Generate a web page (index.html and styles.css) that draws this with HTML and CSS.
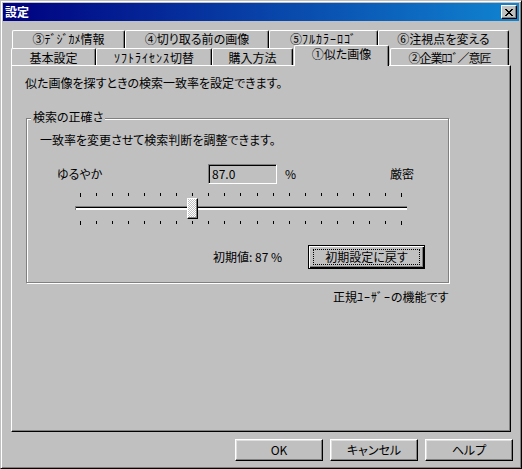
FILE: index.html
```html
<!DOCTYPE html>
<html>
<head>
    <meta http-equiv="Content-Type" content="text/html; charset=utf-8"/>
    <title>設定</title>
    <link rel="stylesheet" href="styles.css">
</head>
<body>
<div class="window">
    <div class="titlebar">
        <span class="title">設定</span>
        <div class="close">
            <svg width="8" height="7" viewBox="0 0 8 7">
                <path d="M0 0h2v1h-2zM6 0h2v1h-2zM1 1h2v1h-2zM5 1h2v1h-2zM2 2h4v1h-4zM3 3h2v1h-2zM2 4h4v1h-4zM1 5h2v1h-2zM5 5h2v1h-2zM0 6h2v1h-2zM6 6h2v1h-2z" fill="#000"/>
            </svg>
        </div>
    </div>

    <div class="tabs">
        <div class="tabrow back">
            <div class="tab" style="width:113px">③ﾃﾞｼﾞｶﾒ情報</div>
            <div class="tab" style="width:144px">④切り取る前の画像</div>
            <div class="tab" style="width:109px">⑤<span class="kana">ﾌﾙｶﾗｰﾛｺﾞ</span></div>
            <div class="tab" style="width:131px">⑥注視点を変える</div>
        </div>
        <div class="tabrow front">
            <div class="tab" style="width:85px">基本設定</div>
            <div class="tab" style="width:116px"><span class="kana">ｿﾌﾄﾗｲｾﾝｽ</span>切替</div>
            <div class="tab" style="width:81px">購入方法</div>
            <div class="tab selected" style="width:95px">①似た画像</div>
            <div class="tab" style="width:119px"><span class="tight">②企業ﾛｺﾞ／意匠</span></div>
        </div>
    </div>

    <div class="panel">
        <div class="desc">似た画像を探すときの検索一致率を設定できます。</div>

        <div class="group">
            <span class="group-label">検索の正確さ</span>
            <div class="hint">一致率を変更させて検索判断を調整できます。</div>

            <div class="row">
                <span class="soft">ゆるやか</span>
                <div class="edit">87.0</div>
                <span class="pct">%</span>
                <span>厳密</span>
            </div>

            <div class="slider">
                <div class="ticks">
                    <i class="long"></i><i></i><i></i><i></i><i></i><i></i><i></i><i></i><i></i><i></i><i></i><i></i><i></i><i></i><i></i><i></i><i></i><i></i><i></i><i></i><i class="long"></i>
                </div>
                <div class="track">
                    <div class="channel"></div>
                    <div class="thumb" style="left:112px"></div>
                </div>
                <div class="ticks">
                    <i class="long"></i><i></i><i></i><i></i><i></i><i></i><i></i><i></i><i></i><i></i><i></i><i></i><i></i><i></i><i></i><i></i><i></i><i></i><i></i><i></i><i class="long"></i>
                </div>
            </div>

            <div class="reset-row">
                <span class="initial">初期値: 87 %</span>
                <div class="btn default"><span class="focus">初期設定に戻す</span></div>
            </div>
        </div>

        <div class="note">正規<span class="kana">ﾕｰｻﾞｰ</span>の機能です</div>
    </div>

    <div class="buttons">
        <div class="btn">OK</div>
        <div class="btn">キャンセル</div>
        <div class="btn">ヘルプ</div>
    </div>
</div>
</body>
</html>
```

FILE: styles.css
```css
* {
    box-sizing: border-box;
}

body {
    margin: 0;
    font-family: "Noto Sans CJK JP", "Liberation Sans", sans-serif;
    font-size: 12px;
    font-feature-settings: "palt";
    line-height: 16px;
    color: #000;
    background: #c0c0c0;
}

/* half-width katakana reads a little wider in the original */
.kana {
    letter-spacing: 1px;
}

.tight {
    letter-spacing: -1px;
}

/* window frame */
.window {
    width: 522px;
    height: 469px;
    background: #c0c0c0;
    border: 1px solid;
    border-color: #c0c0c0 #000 #000 #c0c0c0;
    box-shadow: inset 1px 1px #fff, inset -1px -1px #808080;
    padding: 2px;
}

.titlebar {
    height: 18px;
    display: flex;
    align-items: center;
    justify-content: space-between;
    padding: 0 2px 0 2px;
    background: linear-gradient(to right, #000080, #1084d0);
}

.title {
    color: #fff;
    font-weight: bold;
    font-size: 12px;
}

.close {
    width: 16px;
    height: 14px;
    display: flex;
    align-items: center;
    justify-content: center;
    background: #c0c0c0;
    border: 1px solid;
    border-color: #fff #000 #000 #fff;
    box-shadow: inset -1px -1px #808080;
}

.close svg {
    display: block;
    margin-left: -1px;
}

/* tabs */
.tabs {
    margin-top: 9px;
    position: relative;
    z-index: 1;
}

.tabrow {
    display: flex;
    align-items: flex-end;
}

.tabrow.back {
    height: 18px;
    margin-left: 9px;
}

.tabrow.front {
    height: 17px;
    margin-left: 8px;
}

.tab {
    height: 100%;
    text-align: center;
    line-height: 16px;
    padding-top: 1px;
    white-space: nowrap;
    background: #c0c0c0;
    border-top: 1px solid #fff;
    border-left: 1px solid #fff;
    border-right: 1px solid #000;
    border-radius: 2px 2px 0 0;
    box-shadow: inset -1px 0 #808080;
}

.tabrow.back .tab {
    padding-top: 0;
}

.tab.selected {
    height: 21px;
    margin-left: 1px;
    margin-right: 1px;
    margin-bottom: -1px;
    padding-top: 0;
}

/* page */
.panel {
    margin-left: 8px;
    width: 500px;
    height: 367px;
    border: 1px solid;
    border-color: #fff #000 #000 #fff;
    box-shadow: inset -1px -1px #808080;
    padding-top: 9px;
}

.desc {
    margin-left: 13px;
}

.group {
    position: relative;
    margin: 27px 0 0 14px;
    width: 423px;
    height: 165px;
    border: 1px solid #808080;
    box-shadow: inset 1px 1px #fff, 1px 1px #fff;
}

.group-label {
    position: absolute;
    top: -10px;
    left: 4px;
    padding: 0 2px;
    background: #c0c0c0;
}

.hint {
    margin: 13px 0 0 13px;
}

.row {
    display: flex;
    align-items: center;
    height: 20px;
    margin-top: 16px;
}

.soft {
    margin-left: 30px;
    width: 151px;
}

.edit {
    width: 69px;
    height: 20px;
    padding: 1px 0 0 3px;
    border: 1px solid;
    border-color: #808080 #fff #fff #808080;
    box-shadow: inset 1px 1px #000, inset -1px -1px #c0c0c0;
    font-size: 12px;
}

.pct {
    margin-left: 8px;
    width: 105px;
}

/* trackbar */
.slider {
    margin-left: 48px;
    width: 332px;
}

.ticks {
    display: flex;
    justify-content: space-between;
    align-items: flex-start;
    margin: 9px 5px 0 5px;
    height: 4px;
}

.slider .ticks:last-child {
    margin-top: 1px;
}

.ticks i {
    display: block;
    width: 1px;
    height: 3px;
    background: #000;
}

.ticks i.long {
    height: 4px;
}

.track {
    position: relative;
    height: 22px;
    margin-top: 1px;
}

.channel {
    position: relative;
    top: 8px;
    height: 4px;
    background: #fff;
    border-top: 1px solid #808080;
    border-left: 1px solid #808080;
    box-shadow: inset 0 1px #000;
}

.thumb {
    position: absolute;
    top: 0;
    width: 11px;
    height: 21px;
    border: 1px solid;
    border-color: #fff #000 #000 #fff;
    box-shadow: inset -1px -1px #808080;
    background: repeating-conic-gradient(#fff 0 25%, #c0c0c0 0 50%) 0 0 / 2px 2px;
}

.reset-row {
    display: flex;
    align-items: center;
    height: 24px;
    margin-top: 20px;
}

.initial {
    margin-left: 186px;
    width: 95px;
}

/* buttons */
.btn {
    width: 88px;
    height: 22px;
    display: flex;
    align-items: center;
    justify-content: center;
    background: #c0c0c0;
    border: 1px solid;
    border-color: #fff #000 #000 #fff;
    box-shadow: inset -1px -1px #808080, inset 1px 1px #dfdfdf;
}

.btn.default {
    width: 117px;
    height: 24px;
    border: 1px solid #000;
    box-shadow: inset 1px 1px #fff, inset -1px -1px #000, inset -2px -2px #808080;
}

.btn .focus {
    width: 107px;
    height: 16px;
    line-height: 14px;
    text-align: center;
    border: 1px dotted #000;
}

.note {
    margin: 6px 0 0 321px;
}

.buttons {
    display: flex;
    justify-content: flex-end;
    gap: 7px;
    margin-top: 7px;
    padding-right: 6px;
}
```
